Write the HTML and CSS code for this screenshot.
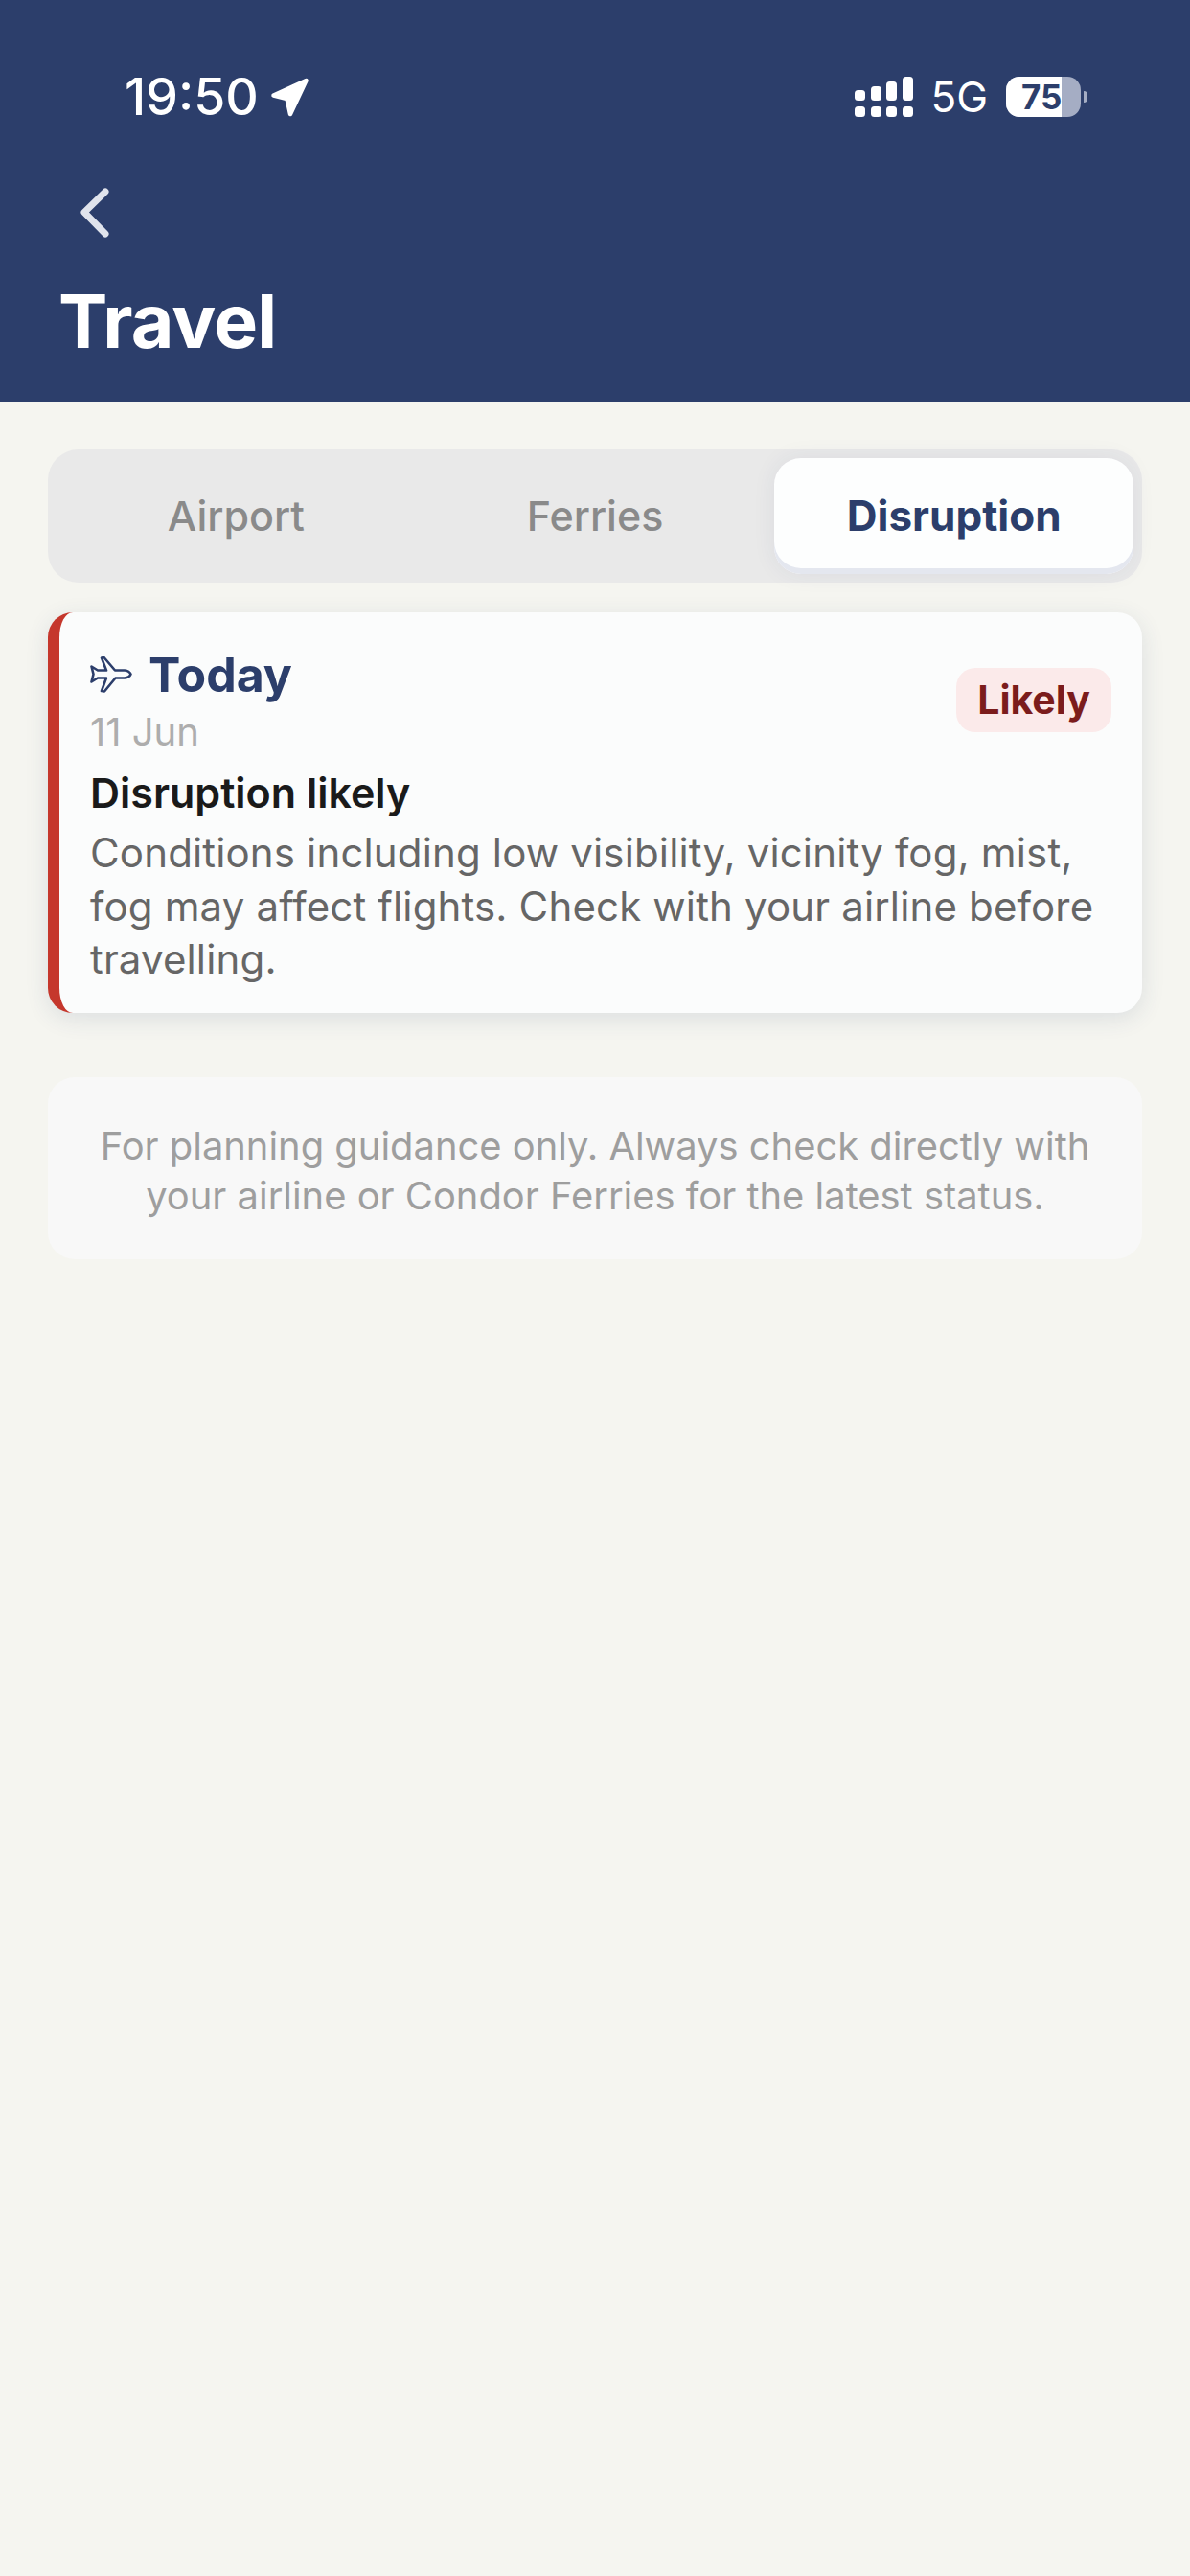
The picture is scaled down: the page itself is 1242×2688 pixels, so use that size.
FILE: index.html
```html
<!DOCTYPE html>
<html lang="en">
<head>
    <meta charset="UTF-8">
    <meta name="viewport" content="width=device-width, initial-scale=1.0">
    <title>Travel</title>
    <link rel="stylesheet" href="styles.css">
</head>
<body>

    <!-- Header -->
    <header class="header">
        <div class="status-bar">
            <div class="status-left">
                <span class="clock">19:50</span>
                <svg class="location-arrow" width="41" height="41" viewBox="0 0 41 41">
                    <path d="M3.5 18.5 L37.5 3 L21 38 L17.5 22 Z" fill="#fff" stroke="#fff" stroke-width="4.5" stroke-linejoin="round"/>
                </svg>
            </div>
            <div class="status-right">
                <svg class="signal" width="62" height="42" viewBox="0 0 62 42">
                    <rect x="0" y="14" width="11" height="11" rx="3.5" fill="#fff"/>
                    <rect x="17" y="10" width="11" height="15" rx="3.5" fill="#fff"/>
                    <rect x="33" y="5" width="11" height="20" rx="3.5" fill="#fff"/>
                    <rect x="50" y="0" width="11" height="25" rx="3.5" fill="#fff"/>
                    <rect x="0" y="31" width="11" height="11" rx="3.5" fill="#fff"/>
                    <rect x="17" y="31" width="11" height="11" rx="3.5" fill="#fff"/>
                    <rect x="33" y="31" width="11" height="11" rx="3.5" fill="#fff"/>
                    <rect x="50" y="31" width="11" height="11" rx="3.5" fill="#fff"/>
                </svg>
                <span class="network">5G</span>
                <div class="battery">
                    <div class="battery-body">
                        <div class="battery-fill"></div>
                        <span class="battery-level">75</span>
                    </div>
                    <div class="battery-nub"></div>
                </div>
            </div>
        </div>
        <div class="back">
            <svg width="32" height="52" viewBox="0 0 32 52">
                <path d="M27 4 L5 25.5 L27 48" fill="none" stroke="#e0e3ec" stroke-width="7" stroke-linecap="round" stroke-linejoin="round"/>
            </svg>
        </div>
        <h1 class="title">Travel</h1>
    </header>

    <main class="content">
        <!-- Tabs -->
        <div class="tabs">
            <div class="tab">Airport</div>
            <div class="tab">Ferries</div>
            <div class="tab active">Disruption</div>
        </div>

        <!-- Disruption card -->
        <section class="card">
            <div class="card-top">
                <div>
                    <div class="day">
                        <svg class="plane" width="44" height="38" viewBox="0 0 44 38">
                            <path d="M42.5 18.5 Q41 15 36 14.5 L26 14.5 L14.5 1 L12 1.5 L17 14.5 L8 14.5 L1.5 10.5 L3.5 18.5 L1.5 26.5 L8 22.5 L17 22.5 L12 36 L15 36.5 L26.5 22.5 L36 22.5 Q41 22 42.5 18.5 Z" fill="none" stroke="#2c3e6b" stroke-width="2.6" stroke-linejoin="round"/>
                        </svg>
                        <span class="day-name">Today</span>
                    </div>
                    <div class="date">11 Jun</div>
                </div>
                <span class="badge">Likely</span>
            </div>
            <h2 class="card-title">Disruption likely</h2>
            <p class="card-text">Conditions including low visibility, vicinity fog, mist, fog may affect flights. Check with your airline before travelling.</p>
        </section>

        <!-- Footer note -->
        <div class="note">For planning guidance only. Always check directly with your airline or Condor Ferries for the latest status.</div>
    </main>

</body>
</html>
```

FILE: styles.css
```css
body {
    font-family: Inter, "Noto Sans", sans-serif;
    margin: 0;
    height: 2688px;
    overflow: hidden;
    background-color: #f5f5f0;
}

/* Header and status bar */
.header {
    background-color: #2c3e6b;
    height: 419px;
    box-sizing: border-box;
    padding: 74px 0 0 63px;
    color: white;
}

.status-bar {
    display: flex;
    justify-content: space-between;
    align-items: center;
    height: 54px;
    padding: 0 107px 0 67px;
}

.status-left, .status-right {
    display: flex;
    align-items: center;
}

.clock {
    font-size: 53.5px;
    font-weight: 500;
    line-height: 54px;
}

.location-arrow {
    margin-left: 12px;
}

.signal {
    margin-right: 17px;
}

.network {
    font-size: 44px;
    line-height: 54px;
    margin-right: 19px;
}

.battery {
    display: flex;
    align-items: center;
}

.battery-body {
    position: relative;
    width: 78px;
    height: 42px;
    border-radius: 14px;
    background-color: #a5adc4;
    overflow: hidden;
}

.battery-fill {
    width: 58px;
    height: 100%;
    background-color: white;
}

.battery-level {
    position: absolute;
    top: 0;
    left: 16px;
    font-size: 35px;
    font-weight: 700;
    line-height: 42px;
    color: #2c3e6b;
}

.battery-nub {
    width: 4px;
    height: 12px;
    margin-left: 3px;
    border-radius: 0 6px 6px 0;
    background-color: #a5adc4;
}

.back {
    margin: 68px 0 0 20px;
    height: 52px;
}

.title {
    margin: 42px 0 0 -2px;
    font-size: 77px;
    font-weight: 700;
    letter-spacing: -0.8px;
    line-height: 90px;
}

/* Page content */
.content {
    padding: 50px 50px 0;
}

.tabs {
    display: flex;
    height: 139px;
    box-sizing: border-box;
    padding: 9px;
    border-radius: 32px;
    background-color: #e9e9e9;
}

.tab {
    flex: 1;
    display: flex;
    justify-content: center;
    align-items: center;
    font-size: 43px;
    font-weight: 500;
    color: #8a8a8a;
    padding-bottom: 2px;
}

.tab.active {
    background-color: #fdfefe;
    border-radius: 28px;
    color: #2c3e6b;
    font-size: 44px;
    font-weight: 700;
    box-shadow: inset 0 -6px 0 #e4e7ef, 0 0 24px rgba(44, 62, 107, 0.07);
}

.card {
    margin-top: 31px;
    height: 418px;
    box-sizing: border-box;
    padding: 37px 32px 0 32px;
    border-left: 12px solid #c5372c;
    border-radius: 26px;
    background-color: #fbfcfc;
    box-shadow: 0 6px 24px rgba(44, 62, 107, 0.12);
}

.card-top {
    display: flex;
    justify-content: space-between;
    align-items: flex-start;
}

.day {
    display: flex;
    align-items: center;
    height: 56px;
}

.plane {
    margin-right: 17px;
}

.day-name {
    font-size: 50px;
    font-weight: 700;
    color: #2c3e6b;
}

.date {
    margin-top: 4px;
    font-size: 40px;
    line-height: 56px;
    color: #adadad;
}

.badge {
    margin-top: 21px;
    padding: 0 22px;
    height: 67px;
    line-height: 67px;
    border-radius: 20px;
    background-color: #fbeaea;
    color: #7b1c1c;
    font-size: 41px;
    font-weight: 700;
}

.card-title {
    margin: 7px 0 0;
    font-size: 43px;
    font-weight: 600;
    line-height: 56px;
    color: #1a1a1a;
}

.card-text {
    margin: 7px 0 0;
    font-size: 42px;
    letter-spacing: 0.15px;
    line-height: 55.5px;
    color: #666666;
}

.note {
    margin-top: 67px;
    padding: 46px 20px 41px;
    border-radius: 28px;
    background-color: #f8f8f8;
    font-size: 39.9px;
    line-height: 51.5px;
    text-align: center;
    color: #9e9e9e;
}
```
